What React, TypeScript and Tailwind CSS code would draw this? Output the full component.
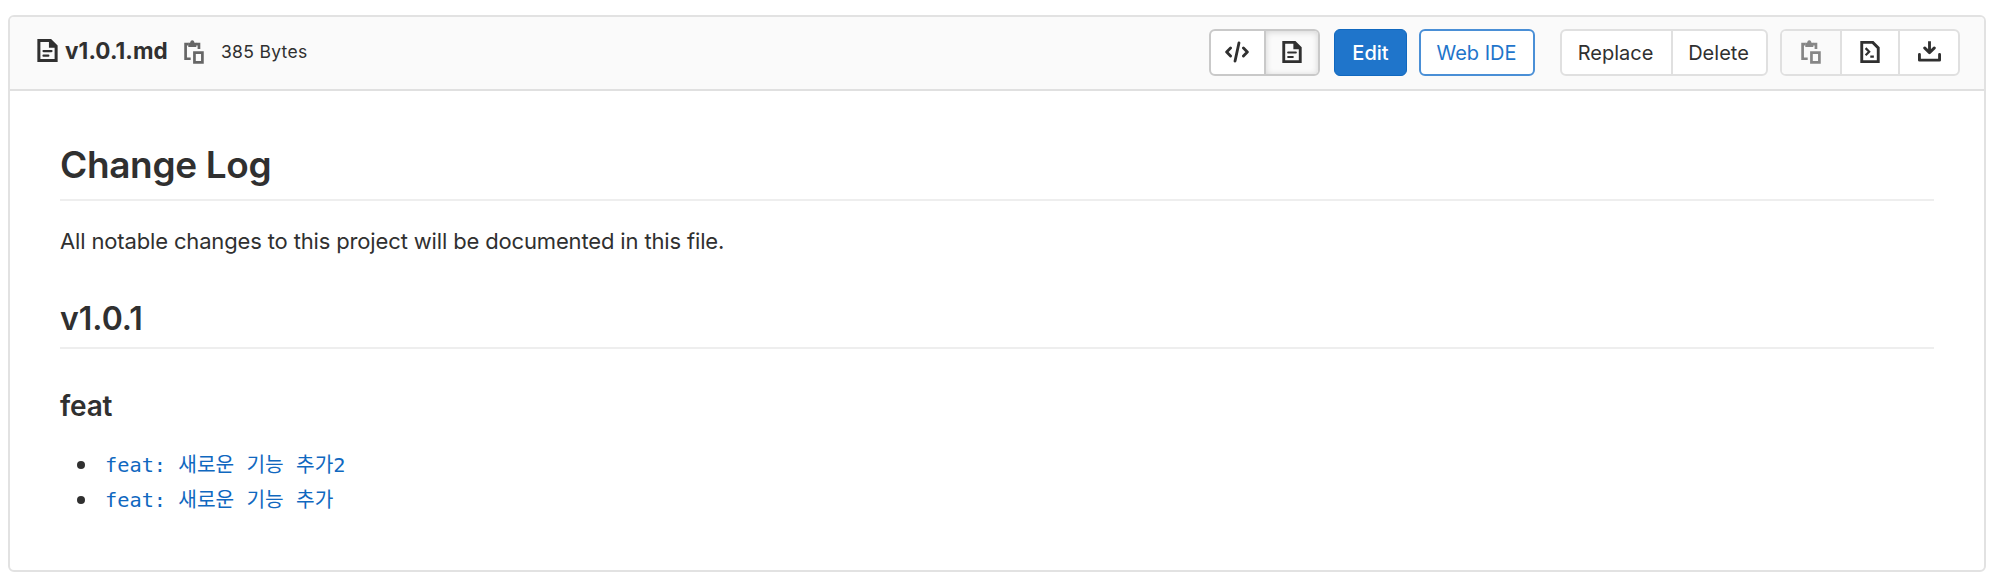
import React from "react";

type IconProps = { className?: string };

function DocIcon({ className = "" }: IconProps) {
  return (
    <svg viewBox="0 0 16 16" className={className} fill="none" stroke="currentColor" strokeWidth="2.1">
      <path d="M2 1h8l4 4v10H2z" />
      <path d="M9 1v5h5.5z" fill="currentColor" stroke="none" />
      <path d="M5.2 8.4h5.6M5.2 11.6h3.4" strokeWidth="1.5" strokeLinecap="round" />
    </svg>
  );
}

function CopyIcon({ className = "" }: IconProps) {
  return (
    <svg viewBox="0 0 16 16" className={className} fill="none" stroke="currentColor" strokeWidth="1.8">
      <path d="M5.8 12.5H2.4V2.7h2M9.3 2.7h2V6" />
      <path d="M4.2 4.6V1.9h1.2C5.6.7 6.2.2 6.85.2s1.3.5 1.5 1.7h1.2v2.7z" fill="currentColor" stroke="none" />
      <path d="M8.3 8.4h5.3v6.5H8.3z" />
    </svg>
  );
}

function CodeIcon({ className = "" }: IconProps) {
  return (
    <svg viewBox="0 0 16 16" className={className} fill="none" stroke="currentColor" strokeWidth="1.9" strokeLinecap="round" strokeLinejoin="round">
      <path d="M3.7 5.4L1.1 8l2.6 2.6M12.3 5.4L14.9 8l-2.6 2.6M9.3 2L6.7 14" />
    </svg>
  );
}

function RawIcon({ className = "" }: IconProps) {
  return (
    <svg viewBox="0 0 16 16" className={className} fill="none" stroke="currentColor" strokeWidth="2.1">
      <path d="M2 1h8l4 4v10H2z" />
      <path d="M4.8 5.2l2.6 2.6-2.6 2.6M8.2 11.4h2.6" strokeWidth="1.6" />
    </svg>
  );
}

function DownloadIcon({ className = "" }: IconProps) {
  return (
    <svg viewBox="0 0 16 16" className={className} fill="none" stroke="currentColor" strokeWidth="2" strokeLinejoin="round">
      <path d="M1 10v4h14v-4" strokeLinecap="round" />
      <path d="M8 .8V8" />
      <path d="M4.6 5.5L8 8.8l3.4-3.3" strokeLinecap="round" />
    </svg>
  );
}

const entries = ["feat: 새로운 기능 추가2", "feat: 새로운 기능 추가"];

export default function App() {
  return (
    <div className="h-[581px] w-[2000px] bg-white pl-2 pt-[15px] font-['Inter','Noto_Sans_CJK_KR',sans-serif] text-[#303030]">
      <div className="flex h-[557px] w-[1978px] flex-col rounded-md border-2 border-[#e2e2e2]">
        <header className="flex h-[74px] shrink-0 items-start rounded-t border-b-2 border-[#e0e0e0] bg-[#fafafa] pl-[26px] pt-[12px]">
          <div className="flex h-[46px] items-center whitespace-nowrap">
            <DocIcon className="-mt-[3px] size-[23px]" />
            <strong className="mb-[3px] ml-[6px] w-[117px] text-[22.5px] font-bold tracking-[0.1px]">v1.0.1.md</strong>
            <CopyIcon className="size-6 text-[#666]" />
            <span className="ml-[15px] mt-px text-[17.5px] tracking-[0.3px]">385 Bytes</span>
          </div>
          <div className="ml-auto mr-[24px] flex h-[47px] text-[20px]">
            <div className="mr-[14px] flex w-[111px] overflow-hidden rounded-md border-2 border-[#c9c9c9] bg-white">
              <button className="flex w-[55px] items-center justify-center border-r-2 border-[#c9c9c9] pr-px">
                <CodeIcon className="-mt-[2px] size-6" />
              </button>
              <button className="flex flex-1 items-center justify-center bg-[#fafafa] shadow-[inset_0_1px_6px_rgba(0,0,0,0.16)]">
                <DocIcon className="-mt-[2px] size-[22px]" />
              </button>
            </div>
            <button className="mr-3 w-[73px] rounded-md border border-[#1068bf] bg-[#1f75cb] pt-px font-medium text-white">Edit</button>
            <button className="mr-[25px] w-[116px] rounded-md border-2 border-[#4a8fd6] bg-white pr-px pt-px text-[#1f75cb]">Web IDE</button>
            <div className="mr-3 flex w-[208px] rounded-md border-2 border-[#e0e0e0] bg-white">
              <button className="w-[111px] border-r-2 border-[#e0e0e0] pr-0.5 pt-px">Replace</button>
              <button className="flex-1 pr-0.5 pt-px">Delete</button>
            </div>
            <div className="flex w-[180px] overflow-hidden rounded-md border-2 border-[#e0e0e0] bg-white">
              <button className="flex w-[60px] items-center justify-center border-r-2 border-[#e0e0e0] bg-[#fafafa] text-[#868686]">
                <CopyIcon className="-mt-px size-6" />
              </button>
              <button className="flex w-[58px] items-center justify-center border-r-2 border-[#e0e0e0]">
                <RawIcon className="-mt-[2px] size-[22px]" />
              </button>
              <button className="flex flex-1 items-center justify-center">
                <DownloadIcon className="-mt-[2px] size-[23px]" />
              </button>
            </div>
          </div>
        </header>
        <article className="px-[50px] pt-[49px]">
          <h1 className="h-[61px] border-b-2 border-[#eeeeee] text-[37px] font-semibold leading-[50px] tracking-[-0.35px]">Change Log</h1>
          <p className="mt-[24px] text-[22px] leading-8 tracking-[-0.15px]">All notable changes to this project will be documented in this file.</p>
          <h2 className="mt-[41px] h-[51px] border-b-2 border-[#eeeeee] text-[32px] font-semibold leading-[42px]">v1.0.1</h2>
          <h3 className="mt-[39px] text-[28px] font-semibold leading-9 tracking-[-0.2px]">feat</h3>
          <ul className="mt-[23px]">
            {entries.map((entry) => (
              <li key={entry} className="flex h-[35.5px] items-center pl-[17px]">
                <span className="mr-[20px] size-2 rounded-full bg-[#303030]" />
                <a className="font-['DejaVu_Sans_Mono','Noto_Sans_CJK_KR',monospace] text-[20.3px] leading-9 text-[#1068bf]">{entry}</a>
              </li>
            ))}
          </ul>
        </article>
      </div>
    </div>
  );
}
